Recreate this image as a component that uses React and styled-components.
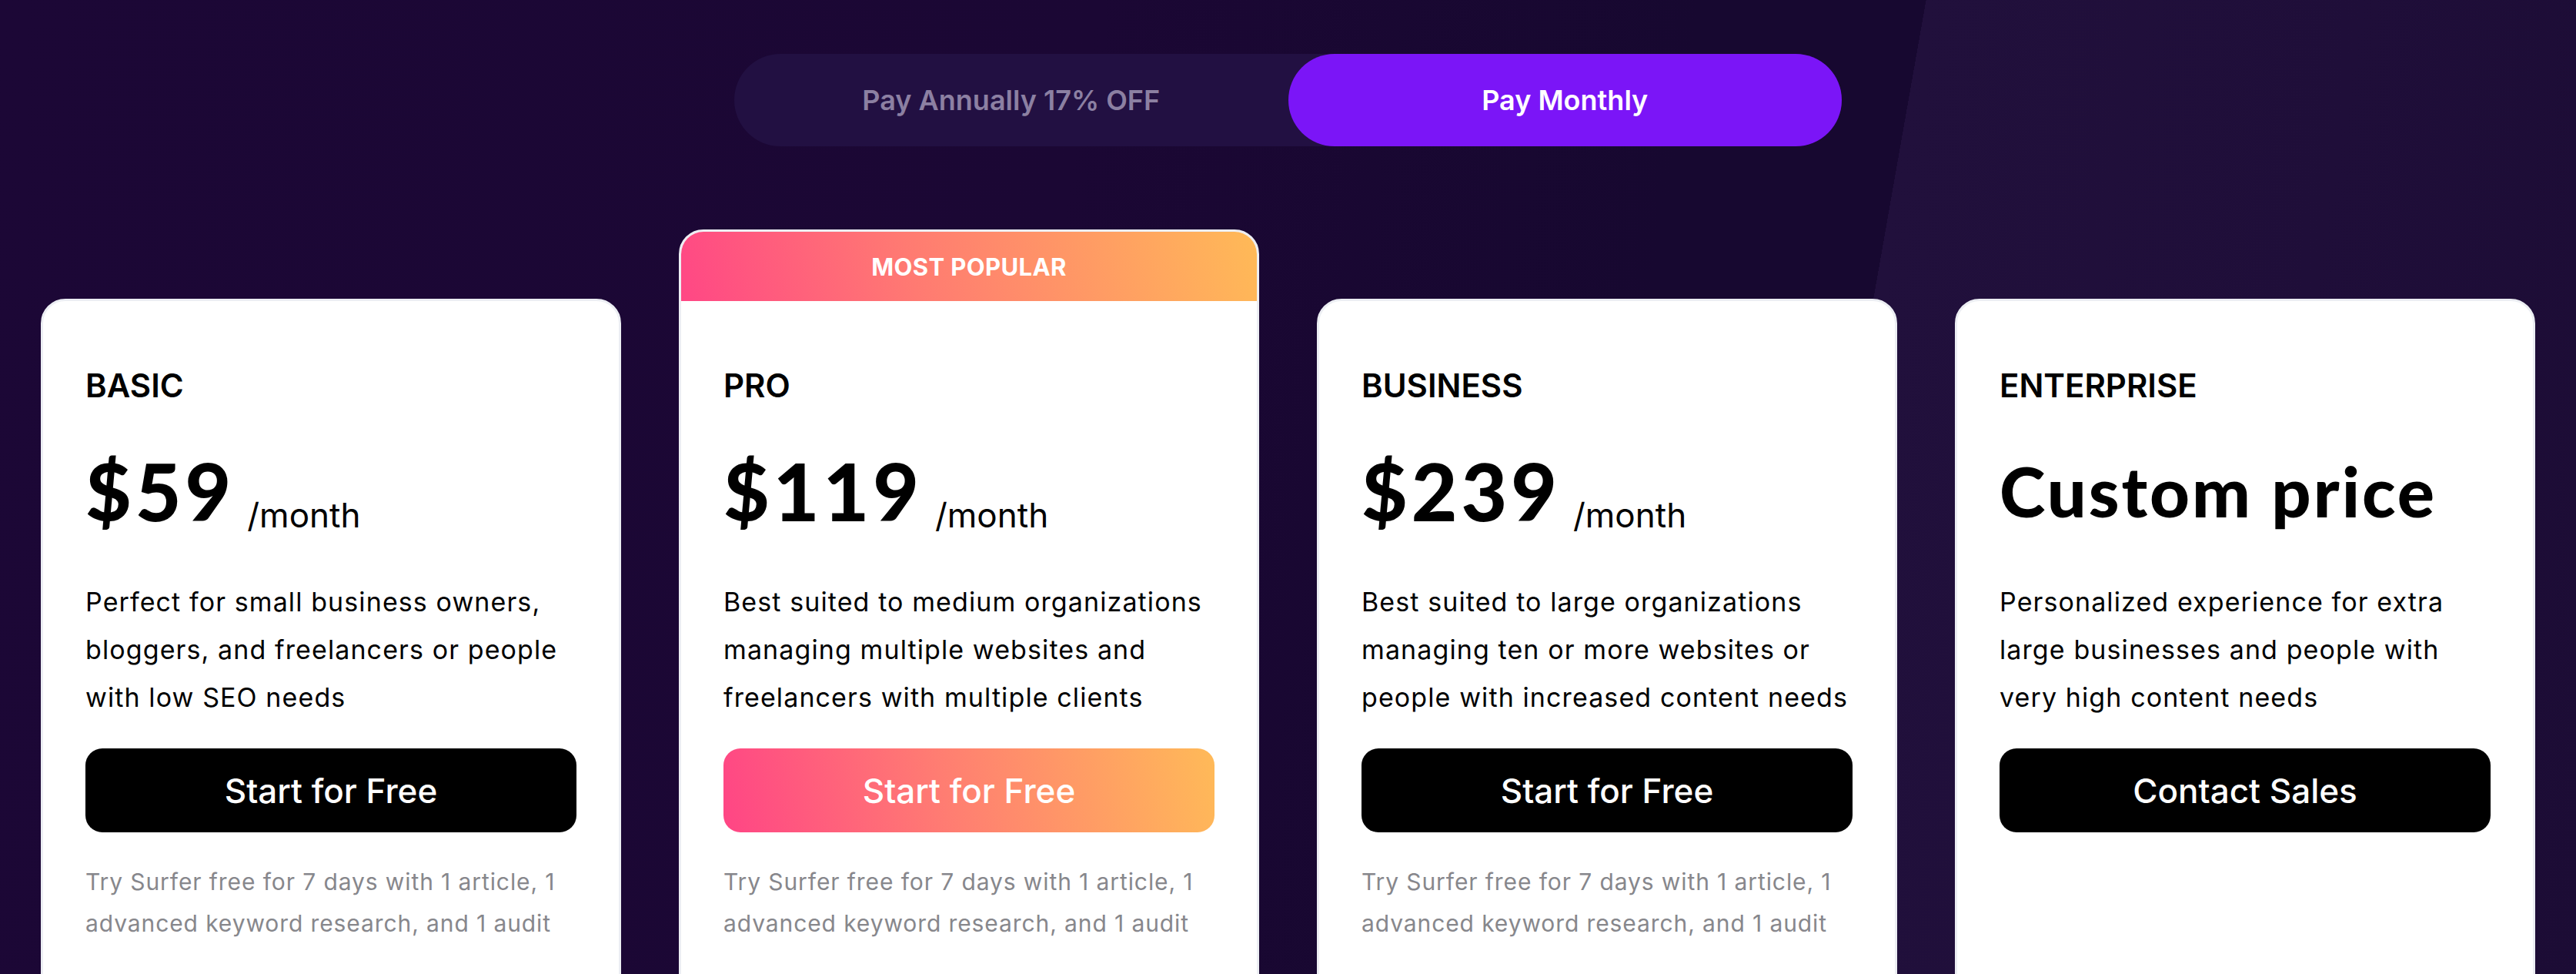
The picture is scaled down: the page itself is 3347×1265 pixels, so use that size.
import React from 'react'
import styled, { createGlobalStyle } from 'styled-components'

const GlobalStyle = createGlobalStyle`
  * {
    box-sizing: border-box;
  }

  html, body {
    margin: 0;
    padding: 0;
    height: 100%;
    overflow: hidden;
  }

  body {
    font-family: Inter, "Noto Sans", "Liberation Sans", sans-serif;
    background: #1b0734;
  }
`

const plans = [
  {
    name: 'BASIC',
    price: '$59',
    description: 'Perfect for small business owners, bloggers, and freelancers or people with low SEO needs',
    cta: 'Start for Free',
    note: 'Try Surfer free for 7 days with 1 article, 1 advanced keyword research, and 1 audit',
  },
  {
    name: 'PRO',
    price: '$119',
    featured: true,
    description: 'Best suited to medium organizations managing multiple websites and freelancers with multiple clients',
    cta: 'Start for Free',
    note: 'Try Surfer free for 7 days with 1 article, 1 advanced keyword research, and 1 audit',
  },
  {
    name: 'BUSINESS',
    price: '$239',
    description: 'Best suited to large organizations managing ten or more websites or people with increased content needs',
    cta: 'Start for Free',
    note: 'Try Surfer free for 7 days with 1 article, 1 advanced keyword research, and 1 audit',
  },
  {
    name: 'ENTERPRISE',
    custom: 'Custom price',
    description: 'Personalized experience for extra large businesses and people with very high content needs',
    cta: 'Contact Sales',
  },
]

const Pricing = () => {
  return (
    <Page>
      <GlobalStyle />
      <Toggle>
        <ToggleOption>Pay Annually 17% OFF</ToggleOption>
        <ToggleOption $active>Pay Monthly</ToggleOption>
      </Toggle>

      <CardGrid>
        {plans.map(plan => (
          <Column key={plan.name} $featured={plan.featured}>
            <Card>
              {plan.featured && <Badge>MOST POPULAR</Badge>}
              <CardBody>
                <PlanName>{plan.name}</PlanName>
                {plan.custom ? (
                  <CustomPrice>{plan.custom}</CustomPrice>
                ) : (
                  <PriceRow>
                    <Amount>{plan.price}</Amount>
                    <Period>/month</Period>
                  </PriceRow>
                )}
                <Description>{plan.description}</Description>
                <CtaButton $featured={plan.featured}>{plan.cta}</CtaButton>
                {plan.note && <Note>{plan.note}</Note>}
              </CardBody>
            </Card>
          </Column>
        ))}
      </CardGrid>
    </Page>
  )
}

export default Pricing

const Page = styled.div`
  height: 100vh;
  overflow: hidden;
  padding: 70px 53px 0;
  display: flex;
  flex-direction: column;
  align-items: center;
  background: linear-gradient(
    100deg,
    #1c0736 0%,
    #1b0734 40%,
    #170830 62%,
    #170830 70.1%,
    #21103c 70.1%,
    #1f0e39 86%,
    #1c0c35 100%
  );
`

const Toggle = styled.div`
  flex-shrink: 0;
  width: 1439px;
  height: 120px;
  display: grid;
  grid-template-columns: 1fr 1fr;
  border-radius: 60px;
  background: #221042;
`

const ToggleOption = styled.div`
  display: flex;
  align-items: center;
  justify-content: center;
  border-radius: 60px;
  font-size: 36px;
  font-weight: 600;
  color: ${p => (p.$active ? '#ffffff' : '#8c80a2')};
  background: ${p => (p.$active ? '#7b15f7' : 'transparent')};
`

const CardGrid = styled.div`
  flex-shrink: 0;
  width: 100%;
  margin-top: 108px;
  display: grid;
  grid-template-columns: repeat(4, 1fr);
  gap: 75px;
  align-items: start;
`

const Column = styled.div`
  padding-top: ${p => (p.$featured ? 0 : 90)}px;
`

const Card = styled.div`
  background: #ffffff;
  border: 3px solid #eceef3;
  border-radius: 32px;
  overflow: hidden;
`

const Badge = styled.div`
  height: 90px;
  display: flex;
  align-items: center;
  justify-content: center;
  background: linear-gradient(75deg, #ff4785 0%, #ff7a72 40%, #ffba57 100%);
  color: #ffffff;
  font-size: 31px;
  font-weight: 700;
  letter-spacing: 0.4px;
`

const CardBody = styled.div`
  min-height: 1000px;
  padding: 85px 55px 0;
  display: flex;
  flex-direction: column;
`

const PlanName = styled.div`
  font-size: 42px;
  line-height: 1.2;
  font-weight: 600;
  color: #000000;
`

const PriceRow = styled.div`
  margin-top: 60px;
  height: 102px;
  line-height: 102px;
  white-space: nowrap;
`

const Amount = styled.span`
  font-family: Lato, "Noto Sans", sans-serif;
  font-size: 103px;
  font-weight: 900;
  letter-spacing: 5px;
  color: #000000;
`

const Period = styled.span`
  margin-left: 16px;
  font-size: 44px;
  font-weight: 400;
  vertical-align: -8px;
  color: #000000;
`

const CustomPrice = styled.div`
  margin-top: 60px;
  font-family: Lato, "Noto Sans", sans-serif;
  font-size: 90px;
  line-height: 102px;
  font-weight: 900;
  letter-spacing: 3px;
  color: #000000;
`

const Description = styled.p`
  margin: 63px 0 0;
  font-size: 34px;
  line-height: 62px;
  letter-spacing: 1.1px;
  color: #000000;
`

const CtaButton = styled.button`
  margin-top: 35px;
  height: 109px;
  width: 100%;
  border: none;
  border-radius: 22px;
  font-family: inherit;
  font-size: 44px;
  font-weight: 500;
  color: #ffffff;
  background: ${p => (p.$featured ? 'linear-gradient(78deg, #ff4585 0%, #ff7d72 45%, #ffba58 100%)' : '#000000')};
  cursor: pointer;
`

const Note = styled.p`
  margin: 37px 0 0;
  font-size: 30px;
  line-height: 54px;
  letter-spacing: 0.9px;
  color: #87878c;
`
